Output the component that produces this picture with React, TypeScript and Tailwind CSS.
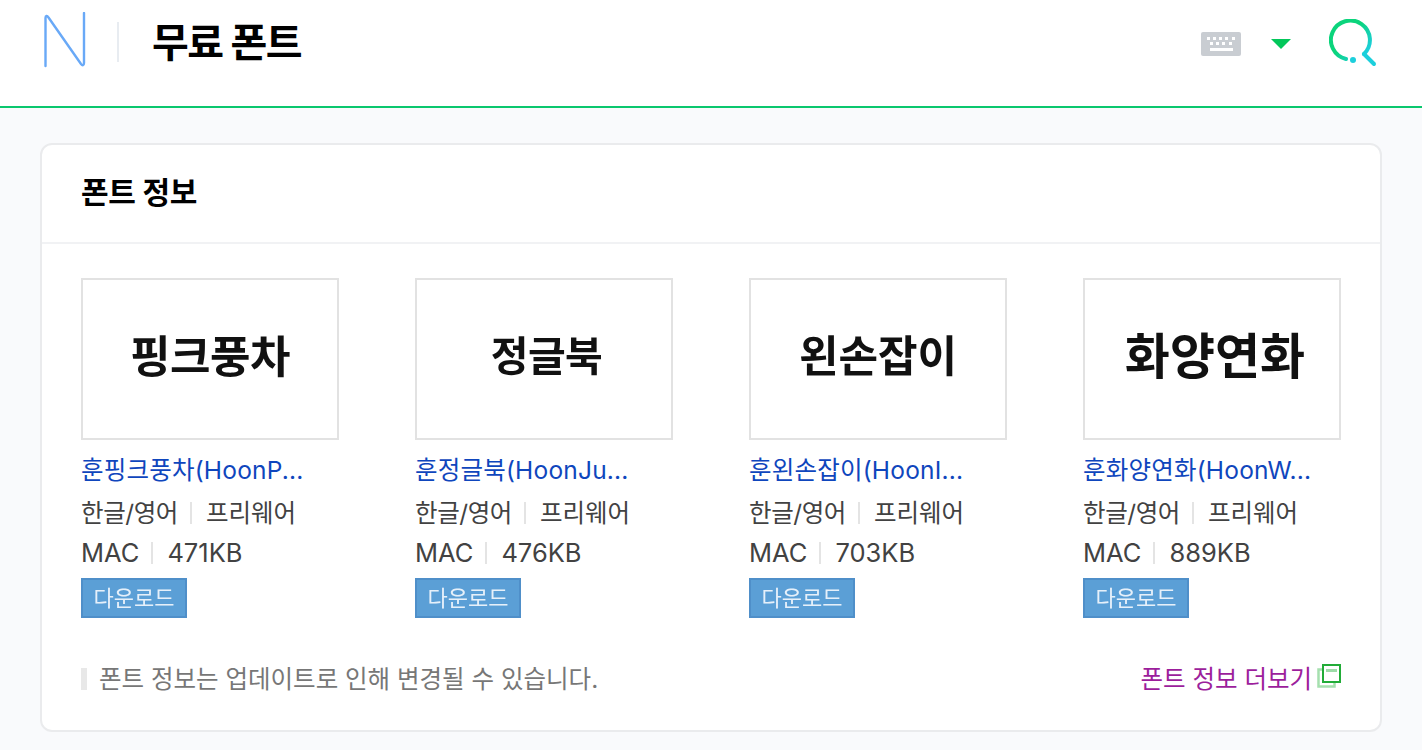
const fonts = [
  { preview: "핑크풍차", previewClass: "text-[44px] tracking-[-0.5px]", name: "훈핑크풍차(HoonP...", size: "471KB" },
  { preview: "정글북", previewClass: "ml-[5px] text-[41px] tracking-[-0.5px]", name: "훈정글북(HoonJu...", size: "476KB" },
  { preview: "왼손잡이", previewClass: "text-[43px] tracking-[0px]", name: "훈왼손잡이(HoonI...", size: "703KB" },
  { preview: "화양연화", previewClass: "ml-[6px] text-[49px] tracking-[0px]", name: "훈화양연화(HoonW...", size: "889KB" },
];

function FontCard({
  preview,
  previewClass,
  name,
  size,
}: {
  preview: string;
  previewClass: string;
  name: string;
  size: string;
}) {
  return (
    <li className="w-[258px]">
      <div className="flex h-[162px] items-center justify-center border-2 border-[#e2e2e2] bg-white pb-[5px]">
        <span className={`font-bold leading-none text-[#111] blur-[0.7px] ${previewClass}`}>{preview}</span>
      </div>
      <a className="mt-[14px] block h-[32px] text-[24.5px] leading-[32px] tracking-[0.2px] text-[#0f46bd]">{name}</a>
      <div className="mt-[11px] flex h-[32px] items-center text-[24.5px] text-[#424242]">
        <span className="tracking-[-0.4px]">한글/영어</span>
        <span className="ml-[12px] mr-[14px] h-[22px] w-[2px] bg-[#e4e4e4]" />
        프리웨어
      </div>
      <div className="mt-[8px] flex h-[32px] items-center text-[25.5px] text-[#424242]">
        MAC
        <span className="ml-[12px] mr-[14px] h-[22px] w-[2px] bg-[#e4e4e4]" />
        {size}
      </div>
      <button className="mt-[9px] block h-[40px] w-[106px] border-2 border-[#4f8fc9] bg-[#5b9fd6] text-[22px] leading-none text-[#e6f0fa]">
        <span className="blur-[0.3px]">다운로드</span>
      </button>
    </li>
  );
}

export default function App() {
  return (
    <div className="h-[750px] overflow-hidden bg-[#f9fafc] font-['Inter','Noto_Sans_CJK_KR',sans-serif]">
      <header className="flex h-[108px] items-center justify-between border-b-2 border-[#0ac76e] bg-white pb-[22px] pl-[44px] pr-[45px]">
        <div className="flex items-center">
          <svg width="42" height="56" viewBox="0 0 42 56" fill="none" className="mb-[4px]">
            <path
              d="M1.5 54V6C1.5 3.5 3 3 4.5 5.5L37 52C38.5 54 40 53.5 40 51V1"
              stroke="#69a9f7"
              strokeWidth="2.4"
              strokeLinecap="round"
            />
          </svg>
          <span className="ml-[31px] h-[40px] w-[2px] bg-[#e8ecf1]" />
          <h1 className="ml-[33px] mt-[2px] text-[40px] font-bold leading-none tracking-[-1.5px] text-black">무료 폰트</h1>
        </div>
        <div className="flex items-center">
          <svg width="40" height="24" viewBox="0 0 40 24" className="mt-[3px]">
            <rect width="40" height="24" rx="2" fill="#c9cdd2" />
            <g fill="#fff">
              <rect x="6" y="5" width="3" height="3" />
              <rect x="12" y="5" width="3" height="3" />
              <rect x="18" y="5" width="3" height="3" />
              <rect x="24" y="5" width="3" height="3" />
              <rect x="31" y="5" width="3" height="3" />
              <rect x="9" y="10" width="3" height="3" />
              <rect x="15" y="10" width="3" height="3" />
              <rect x="21" y="10" width="3" height="3" />
              <rect x="28" y="10" width="3" height="3" />
              <rect x="9" y="16" width="23" height="3" />
            </g>
          </svg>
          <span className="ml-[30px] mt-[3px] h-0 w-0 border-x-[10px] border-t-[10px] border-x-transparent border-t-[#03c75a]" />
          <svg width="48" height="48" viewBox="0 0 48 48" fill="none" className="ml-[38px] mt-[1px]">
            <defs>
              <linearGradient id="q" x1="4" y1="8" x2="44" y2="42" gradientUnits="userSpaceOnUse">
                <stop offset="0.35" stopColor="#0bd47c" />
                <stop offset="0.8" stopColor="#1ccfdc" />
              </linearGradient>
            </defs>
            <path d="M17 40A19.5 19.5 0 1 1 35 35" stroke="url(#q)" strokeWidth="4" strokeLinecap="round" />
            <path d="M35 35L45 45" stroke="#1ccfdc" strokeWidth="4" strokeLinecap="round" />
            <circle cx="24" cy="41" r="3" fill="#1ccfdc" />
          </svg>
        </div>
      </header>

      <main className="mx-[40px] mt-[35px] h-[589px] rounded-[12px] border-2 border-[#eaebed] bg-white">
        <h2 className="flex h-[99px] items-center border-b-2 border-[#f1f2f4] pb-[2px] pl-[39px] text-[30px] font-bold tracking-[-0.3px] text-black">
          폰트 정보
        </h2>
        <ul className="mt-[34px] flex justify-between px-[39px]">
          {fonts.map((f) => (
            <FontCard key={f.preview} {...f} />
          ))}
        </ul>
        <div className="mt-[45px] flex items-center justify-between px-[39px]">
          <p className="border-l-[6px] border-[#e8e8e8] pl-[12px] text-[24.5px] leading-[22px] text-[#777]">
            폰트 정보는 업데이트로 인해 변경될 수 있습니다.
          </p>
          <a className="flex items-center text-[24.5px] leading-[32px] text-[#9c1e9c]">
            폰트 정보 더보기
            <svg width="24" height="24" viewBox="0 0 24 24" fill="none" className="mb-[6px] ml-[5px]">
              <rect x="1.5" y="5.5" width="16" height="17" stroke="#a5e0ae" strokeWidth="2.5" />
              <rect x="6" y="1" width="17" height="17" fill="#fff" stroke="#22ac38" strokeWidth="2" />
              <rect x="9" y="5" width="11" height="3" fill="#9ddca8" />
            </svg>
          </a>
        </div>
      </main>
    </div>
  );
}
